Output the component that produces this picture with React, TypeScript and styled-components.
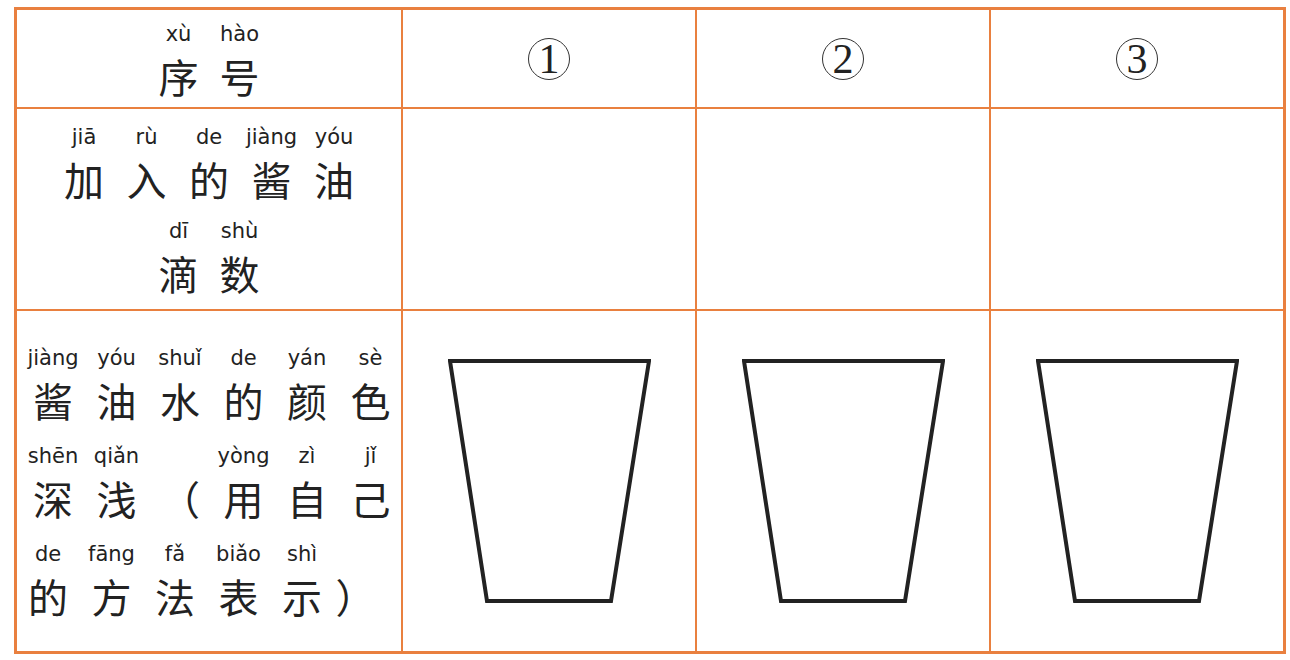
import styled, { createGlobalStyle } from 'styled-components';

const ORANGE = '#e9803f';
const INK = '#222';

const GlobalStyle = createGlobalStyle`
  body {
    margin: 0;
    background: #fff;
    font-family: 'Noto Sans CJK SC', sans-serif;
  }
`;

const Table = styled.div`
  display: grid;
  grid-template-columns: 384px repeat(3, 292px);
  grid-template-rows: 97px 200px 340px;
  gap: 2px;
  width: fit-content;
  margin: 7px 0 0 14px;
  background: ${ORANGE};
  border: 3px solid ${ORANGE};
`;

const Cell = styled.div<{ $start?: boolean; $lift?: number }>`
  background: #fff;
  display: flex;
  flex-direction: column;
  justify-content: center;
  align-items: ${(p) => (p.$start ? 'flex-start' : 'center')};
  gap: ${(p) => (p.$start ? '15px' : '11px')};
  padding-left: ${(p) => (p.$start ? '16px' : '0')};
  padding-top: ${(p) => p.$lift ?? 0}px;
`;

const RubyLine = styled.div<{ $pitch: number; $indent?: number }>`
  display: flex;
  gap: ${(p) => p.$pitch - 40}px;
  margin-left: ${(p) => p.$indent ?? 0}px;
`;

const Slot = styled.div<{ $narrow?: boolean }>`
  display: flex;
  flex-direction: column;
  align-items: center;
  width: ${(p) => (p.$narrow ? '20px' : '40px')};
`;

const Pinyin = styled.span`
  min-height: 25px;
  font-family: 'DejaVu Sans', sans-serif;
  font-size: 21px;
  line-height: normal;
  color: ${INK};
  white-space: nowrap;
`;

const Han = styled.span`
  font-family: 'Noto Sans CJK SC', sans-serif;
  font-size: 40px;
  line-height: normal;
  color: ${INK};
  white-space: nowrap;
`;

const CircleNum = styled.span`
  display: flex;
  align-items: center;
  justify-content: center;
  width: 40px;
  height: 40px;
  border: 1.5px solid #333;
  border-radius: 50%;
  font-family: 'Liberation Serif', serif;
  font-size: 42px;
  line-height: 1;
  color: ${INK};
`;

type Pair = [string, string, boolean?];

const Ruby = ({ items, pitch, indent }: { items: Pair[]; pitch: number; indent?: number }) => (
  <RubyLine $pitch={pitch} $indent={indent}>
    {items.map(([py, ch, narrow], i) => (
      <Slot key={i} $narrow={narrow}>
        <Pinyin>{py}</Pinyin>
        <Han>{ch}</Han>
      </Slot>
    ))}
  </RubyLine>
);

const Cup = () => (
  <svg width="203" height="244" viewBox="0 0 203 244">
    <polygon
      points="2,2 201,2 163,242 39,242"
      fill="none"
      stroke={INK}
      strokeWidth="4"
      strokeLinejoin="miter"
    />
  </svg>
);

const colourLines: Pair[][] = [
  [
    ['jiàng', '酱'],
    ['yóu', '油'],
    ['shuǐ', '水'],
    ['de', '的'],
    ['yán', '颜'],
    ['sè', '色'],
  ],
  [
    ['shēn', '深'],
    ['qiǎn', '浅'],
    ['', '（'],
    ['yòng', '用'],
    ['zì', '自'],
    ['jǐ', '己'],
  ],
  [
    ['de', '的'],
    ['fāng', '方'],
    ['fǎ', '法'],
    ['biǎo', '表'],
    ['shì', '示'],
    ['', '）', true],
  ],
];

export default function App() {
  return (
    <>
      <GlobalStyle />
      <Table>
        <Cell $lift={9}>
          <Ruby
            pitch={61}
            items={[
              ['xù', '序'],
              ['hào', '号'],
            ]}
          />
        </Cell>
        {['1', '2', '3'].map((n) => (
          <Cell key={n}>
            <CircleNum>{n}</CircleNum>
          </Cell>
        ))}

        <Cell $lift={9}>
          <Ruby
            pitch={62.5}
            items={[
              ['jiā', '加'],
              ['rù', '入'],
              ['de', '的'],
              ['jiàng', '酱'],
              ['yóu', '油'],
            ]}
          />
          <Ruby
            pitch={61}
            items={[
              ['dī', '滴'],
              ['shù', '数'],
            ]}
          />
        </Cell>
        <Cell />
        <Cell />
        <Cell />

        <Cell $start $lift={9}>
          {colourLines.map((line, i) => (
            <Ruby key={i} pitch={63.5} indent={i === 2 ? -5 : 0} items={line} />
          ))}
        </Cell>
        {[0, 1, 2].map((i) => (
          <Cell key={i}>
            <Cup />
          </Cell>
        ))}
      </Table>
    </>
  );
}
